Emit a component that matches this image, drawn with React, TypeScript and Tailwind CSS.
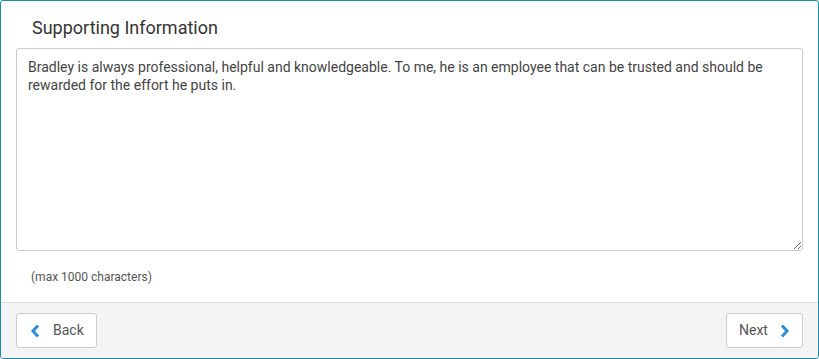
import React, { useState } from 'react'

function App() {
  const [text, setText] = useState(
    'Bradley is always professional, helpful and knowledgeable. To me, he is an employee that can be trusted and should be rewarded for the effort he puts in.'
  )

  return (
    <div className="w-[819px] h-[359px] bg-white" style={{ fontFamily: 'Roboto, "Liberation Sans", sans-serif' }}>
      <div className="h-full flex flex-col border border-[#1590a8] rounded-[3px] overflow-hidden">
        <div className="flex-1 flex flex-col px-[15px]">
          <h2 className="pl-[16px] pt-[15px] pb-[8px] text-[18px] leading-[24px] text-[#333]">Supporting Information</h2>
          <textarea
            value={text}
            onChange={(e) => setText(e.target.value)}
            className="h-[203px] w-full border border-[#ccc] rounded-[3px] px-[11px] py-[9px] text-[14px] leading-[18px] text-[#444] outline-none"
          />
          <p className="pl-[15px] pt-[18px] text-[12px] leading-[16px] text-[#555]">(max 1000 characters)</p>
        </div>
        <div className="h-[56px] bg-[#f4f4f4] border-t border-[#ddd] flex items-center justify-between px-[15px]">
          <button className="h-[35px] w-[81px] flex items-center gap-[12px] pl-[13px] bg-white border border-[#ccc] rounded-[3px] text-[14px] text-[#555]">
            <svg width="11" height="14" viewBox="0 0 11 14">
              <path d="M8 1.5 L3 7 L8 12.5" fill="none" stroke="#2e8fd8" strokeWidth="3" />
            </svg>
            Back
          </button>
          <button className="h-[35px] w-[77px] flex items-center gap-[11px] pl-[12px] bg-white border border-[#ccc] rounded-[3px] text-[14px] text-[#555]">
            Next
            <svg width="11" height="14" viewBox="0 0 11 14">
              <path d="M3 1.5 L8 7 L3 12.5" fill="none" stroke="#2e8fd8" strokeWidth="3" />
            </svg>
          </button>
        </div>
      </div>
    </div>
  )
}

export default App
